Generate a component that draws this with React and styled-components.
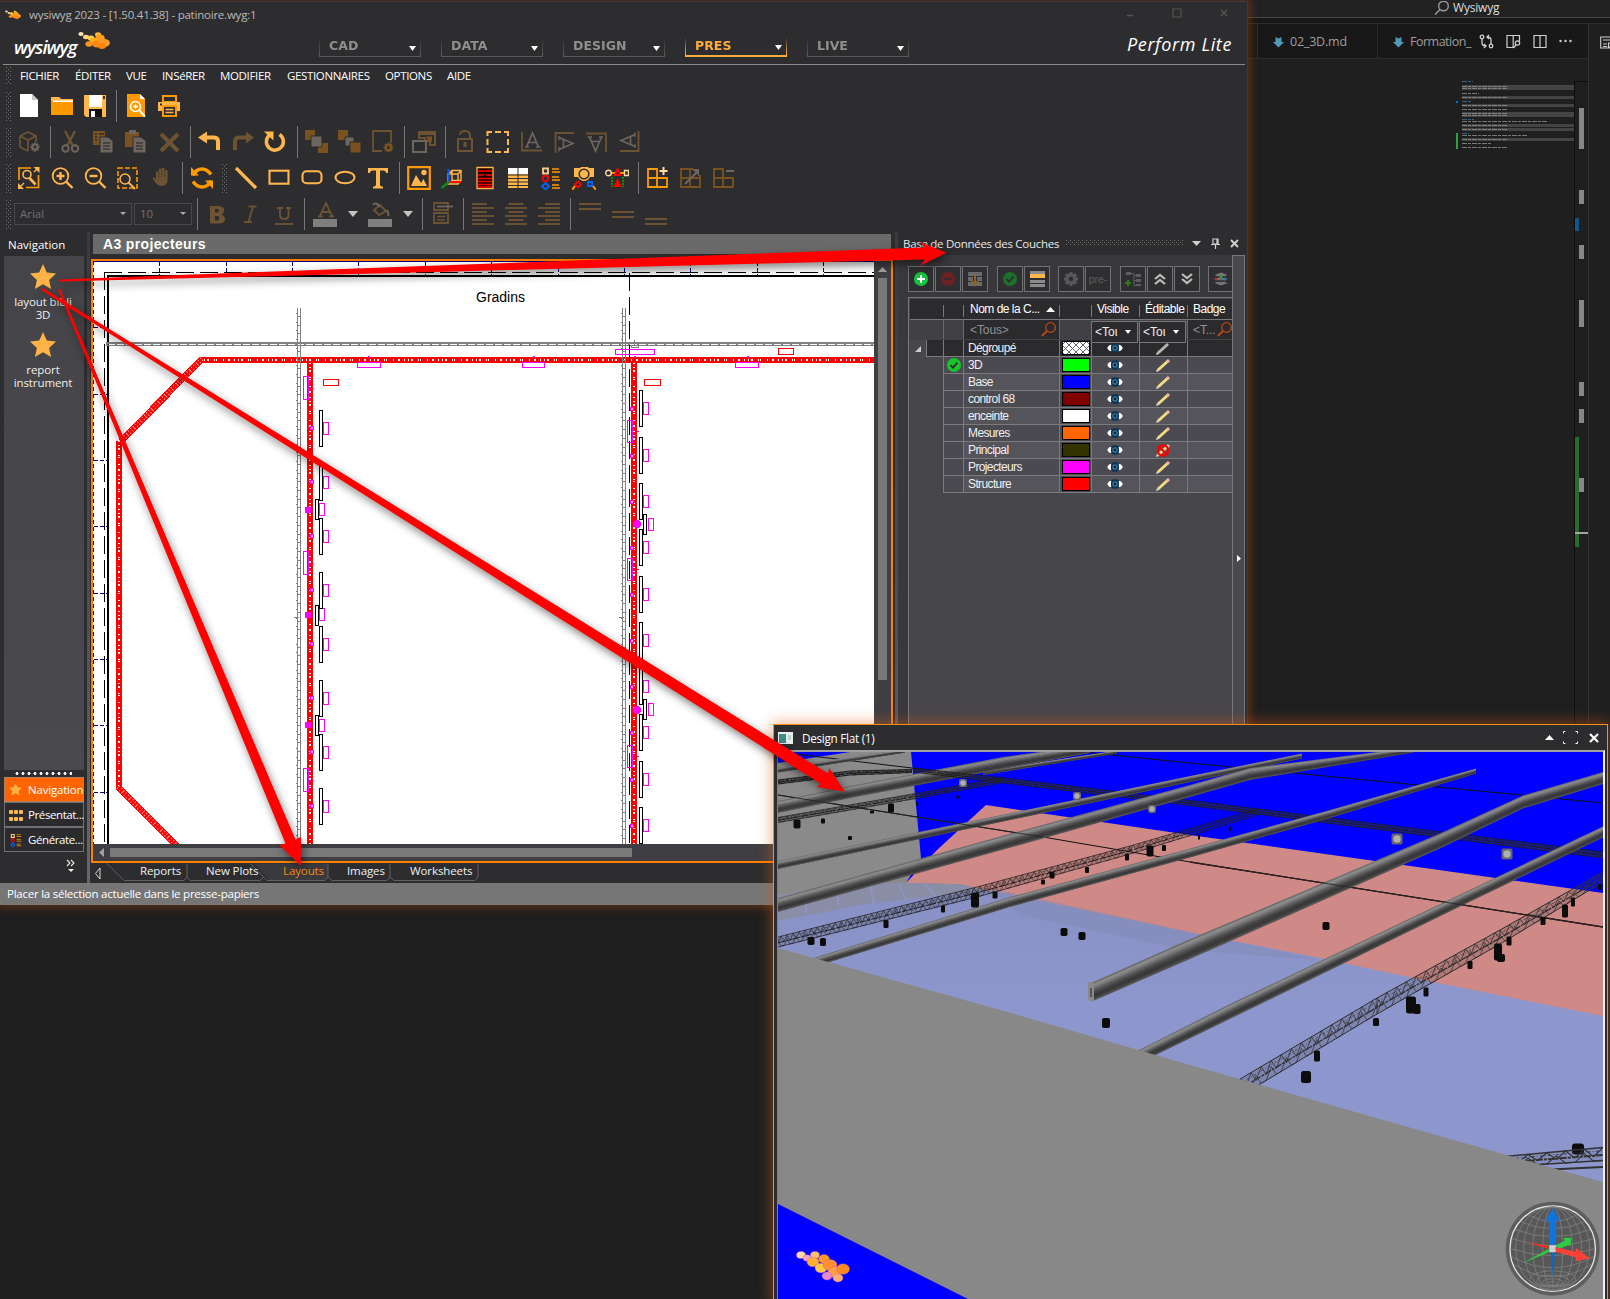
import React from "react";
import styled, { createGlobalStyle, css } from "styled-components";

const GlobalStyle = createGlobalStyle`
  * { box-sizing: border-box; }
  html, body { margin: 0; padding: 0; background: #1f1f1f; overflow: hidden; }
  svg { display: block; flex: none; }
`;

const C = {
  or: "#ff9900",
  li: "#ffb64c",
  dm: "#6b5334",
  db: "#7a5220",
  gr: "#6e665e",
};

const Desktop = styled.div`
  position: relative;
  width: 1610px;
  height: 1299px;
  overflow: hidden;
  background: #1f1f1f;
  color: #fff;
  font-family: "Open Sans", "Noto Sans", sans-serif;
  font-size: 11.5px;
`;

/* ---------- editor window behind ---------- */

const Editor = styled.section`
  position: absolute;
  left: 1164px;
  top: 0;
  width: 446px;
  height: 1299px;
  display: flex;
  flex-direction: column;
`;
const EditorTitle = styled.header`
  height: 18px;
  background: #222223;
  border-bottom: 1px solid #444;
  display: flex;
  align-items: center;
  gap: 3px;
  padding: 0 0 1px 270px;
  font-size: 12px;
  line-height: 16px;
  letter-spacing: -0.2px;
  color: #ddd;
`;
const EditorMain = styled.div`
  flex: 1;
  display: flex;
  border-top: 5px solid #181818;
`;
const EditorLeft = styled.div`
  width: 425px;
  border-right: 1px solid #333;
  border-top: 1px solid #2b2b2b;
  display: flex;
  flex-direction: column;
`;
const EditorTabs = styled.nav`
  height: 35px;
  background: #181818;
  border-bottom: 1px solid #2b2b2b;
  display: flex;
  padding-left: 93px;
`;
const EditorTab = styled.div`
  width: ${(p) => p.$w}px;
  border-left: 1px solid #2b2b2b;
  padding: 1px 0 0 15px;
  display: flex;
  align-items: center;
  gap: 6px;
  color: #9d9d9d;
  font-size: 12.5px;
  letter-spacing: ${(p) => p.$ls || -0.2}px;
`;
const EditorActions = styled.div`
  display: flex;
  align-items: center;
  gap: 12px;
  padding-left: 7px;
`;
const EditorRight = styled.div`
  flex: 1;
  border-top: 1px solid #2b2b2b;
  padding: 12px 0 0 11px;
`;
const MapArea = styled.div`
  flex: 1;
  padding: 22px 0 0 290px;
`;

/* ---------- main window ---------- */

const MainWindow = styled.section`
  position: absolute;
  left: 0;
  top: 1px;
  width: 1248px;
  height: 904px;
  background: #2d2d2f;
  border: 1px solid #3a3a3e;
  border-left-width: 0;
  border-bottom: 0;
  box-shadow: 0 0 9px 2px rgba(180, 70, 14, 0.45);
  display: flex;
  flex-direction: column;
`;
const TitleBar = styled.header`
  height: 26px;
  display: flex;
  align-items: center;
  padding: 0 0 1px 5px;
  gap: 8px;
  color: #b9b9b9;
  letter-spacing: -0.22px;
`;
const TitleText = styled.span`
  flex: 1;
`;
const WinButtons = styled.div`
  display: flex;
  gap: 37px;
  padding: 0 18px 3px 0;
`;
const BrandRow = styled.div`
  height: 37px;
  margin: 0 2px 0 3px;
  border-bottom: 1px solid #8c8c8c;
  display: flex;
`;
const Logo = styled.div`
  width: 316px;
  padding-left: 11px;
  display: flex;
`;
const LogoText = styled.span`
  font: italic 600 18.5px/38px "Open Sans", sans-serif;
  letter-spacing: -0.95px;
  width: 64px;
  white-space: nowrap;
`;
const LogoMark = styled.span`
  padding-top: 4px;
`;
const ModeTabs = styled.nav`
  display: flex;
  gap: 20px;
  padding-top: 8px;
`;
const ModeTab = styled.div`
  width: 102px;
  height: 21px;
  display: flex;
  align-items: center;
  justify-content: space-between;
  padding: 0 4px 1px 9px;
  font: bold 11.5px "DejaVu Sans", sans-serif;
  color: ${(p) => (p.$on ? "#ffab3d" : "#8f8f8f")};
  border: 1px solid;
  border-bottom-width: ${(p) => (p.$on ? 2 : 1)}px;
  border-image: linear-gradient(
      transparent 5%,
      ${(p) => (p.$on ? "#ffab3d" : "#5a5a5a")} 90%
    ) 1;
  svg { margin-top: 4px; }
`;
const ModeLabel = styled.span`
  transform: scaleX(1.09);
  transform-origin: left;
`;
const Edition = styled.div`
  margin-left: auto;
  padding-right: 13px;
  font: italic 18px/33px "Open Sans", sans-serif;
  letter-spacing: 0.62px;
`;
const MenuBar = styled.nav`
  height: 23px;
  display: flex;
  align-items: center;
  padding: 0 0 2px 6px;
`;
const MenuItem = styled.span`
  width: ${(p) => p.$w}px;
  white-space: nowrap;
  font-size: 11.5px;
  letter-spacing: -0.35px;
`;
const dotGrid = css`
  background-image: radial-gradient(circle at 0.5px 0.5px, #747474 0.6px, transparent 0.7px),
    radial-gradient(circle at 0.5px 0.5px, #747474 0.6px, transparent 0.7px);
  background-size: 4px 4px;
  background-position: 0 0, 2px 2px;
`;
const Grip = styled.i`
  width: 6px;
  height: ${(p) => p.$h || 29}px;
  margin-left: ${(p) => p.$ml || 0}px;
  margin-right: ${(p) => p.$mr || 0}px;
  ${dotGrid}
`;
const Toolbar = styled.div`
  height: 36px;
  display: flex;
  align-items: center;
  padding-left: 6px;
`;
const Tool = styled.span`
  width: 33px;
  padding-left: 5px;
`;
const Sep = styled.i`
  width: 1px;
  height: 32px;
  margin: 0 2px 0 5px;
  background: #77777a;
`;
const Combo = styled.div`
  width: ${(p) => p.$w}px;
  height: 22px;
  margin-left: 2px;
  border: 1px solid #49494c;
  display: flex;
  align-items: center;
  justify-content: space-between;
  padding: 0 5px 1px;
  color: #707072;
`;
const ColorTool = styled.div`
  width: 55px;
  display: flex;
  align-items: center;
  gap: 11px;
  padding-left: 6px;
`;

/* ---------- body ---------- */

const Body = styled.div`
  height: 651px;
  display: flex;
`;
const SidePane = styled.aside`
  width: 84px;
  padding-left: 4px;
  display: flex;
  flex-direction: column;
`;
const PaneTitle = styled.div`
  height: 24px;
  line-height: 25px;
  padding-left: 4px;
`;
const NavList = styled.div`
  height: 514px;
  background: linear-gradient(#454449, #4a494e);
  padding-top: 8px;
`;
const NavEntry = styled.div`
  height: 68px;
  display: flex;
  flex-direction: column;
  align-items: center;
  text-align: center;
  line-height: 13px;
  padding: 0 4px 0 2px;
  letter-spacing: -0.1px;
  color: #eee;
  svg { margin-bottom: 5px; }
`;
const Dots = styled.div`
  height: 7px;
  margin: 0 12px 0 10px;
  background: radial-gradient(circle, #eee 1.3px, transparent 1.8px) 0 1px / 6px 5px repeat-x;
`;
const NavButton = styled.div`
  height: 25px;
  border: 1px solid ${(p) => (p.$on ? "#b08060" : "#707073")};
  background: ${(p) => (p.$on ? "#ff6400" : "#2b2b2e")};
  display: flex;
  align-items: center;
  gap: ${(p) => (p.$on ? 6 : 5)}px;
  padding-left: 4px;
  white-space: nowrap;
  letter-spacing: ${(p) => p.$ls || -0.2}px;
`;
const More = styled.div`
  display: flex;
  justify-content: flex-end;
  padding: 7px 8px 0 0;
`;
const Splitter = styled.div`
  width: 3px;
  margin-left: ${(p) => p.$ml}px;
  background: linear-gradient(#3b3b3f, #4c4c50 50%, #68686a);
`;
const Center = styled.div`
  width: 802px;
  margin-left: 1px;
  display: flex;
  flex-direction: column;
`;
const SheetTitle = styled.div`
  height: 20px;
  margin: 2px 2px 5px;
  background: #6a6a6a;
  padding-left: 10px;
  font: bold 14px/20px "Liberation Sans", Arial, sans-serif;
  letter-spacing: 0.35px;
`;
const Sheet = styled.div`
  height: 604px;
  border: 2px solid #ff8000;
  background: #3f3e43;
  display: grid;
  grid-template: 583px 17px / 781px 17px;
`;
const VScroll = styled.div`
  padding: 6px 4px 0;
  display: flex;
  flex-direction: column;
  gap: 6px;
`;
const HScroll = styled.div`
  padding: 4px 0 4px 6px;
  display: flex;
  align-items: center;
  gap: 6px;
`;
const Thumb = styled.i`
  width: ${(p) => p.$w}px;
  height: ${(p) => p.$h}px;
  background: #797979;
`;
const SheetTabs = styled.div`
  height: 20px;
  display: flex;
`;
const TabStrip = styled.div`
  position: relative;
  display: flex;
`;
const TabOutline = styled.svg`
  position: absolute;
  left: 0;
  top: 0;
`;
const SheetTab = styled.span`
  position: relative;
  width: ${(p) => p.$w}px;
  line-height: 16px;
  white-space: nowrap;
  letter-spacing: -0.1px;
  color: ${(p) => (p.$on ? "#f28c0c" : "#f0f0f0")};
`;
const Status = styled.footer`
  height: 22px;
  background: #767676;
  padding-left: 7px;
  line-height: 21px;
  letter-spacing: -0.24px;
`;

/* ---------- layers panel ---------- */

const LayersPane = styled.aside`
  width: 347px;
  display: flex;
  flex-direction: column;
`;
const LayersTitle = styled.div`
  height: 23px;
  display: flex;
  align-items: center;
  padding: 0 5px 1px 5px;
  color: #e8e8e8;
`;
const LayersName = styled.span`
  width: 163px;
  letter-spacing: -0.28px;
  white-space: nowrap;
`;
const TitleDots = styled.i`
  width: 118px;
  height: 6px;
  margin-right: 8px;
  ${dotGrid}
`;
const TitleIcons = styled.div`
  display: flex;
  align-items: center;
  gap: 10px;
`;
const LayersBody = styled.div`
  flex: 1;
  display: flex;
`;
const LayersContent = styled.div`
  width: 334px;
  padding-left: 10px;
  background: #39383c;
  display: flex;
  flex-direction: column;
`;
const Strip = styled.div`
  width: 13px;
  border: 1px solid #78787a;
  border-bottom: 0;
  background: #4a494e;
  padding: 298px 0 0 4px;
`;
const LayerTools = styled.div`
  display: flex;
  padding-top: 11px;
  height: 42px;
  overflow: hidden;
`;
const LayerTool = styled.span`
  flex: none;
  width: 26px;
  height: 26px;
  margin-right: ${(p) => p.$gap || 1}px;
  border: 1px solid #717174;
  background: #2f2f32;
  display: flex;
  align-items: center;
  justify-content: center;
  font: 10.5px "Liberation Sans", sans-serif;
  color: #5c5c5e;
`;
const Table = styled.div`
  flex: 1;
  border: 1px solid #77777a;
  border-width: 1px 0 0 1px;
  background: #47464b;
  padding: 1px 0 0 1px;
  font: 12px "Liberation Sans", Arial, sans-serif;
  letter-spacing: -0.62px;
`;
const rowGrid = css`
  display: grid;
  grid-template-columns: 16px 17px 20px 96px 32px 48px 48px 1fr;
`;
const HeadRow = styled.div`
  ${rowGrid}
  height: 21px;
  background: #2b2b2e;
  border-bottom: 1px solid #77777a;
  line-height: 20px;
  letter-spacing: -0.5px;
`;
const HeadCell = styled.span`
  white-space: nowrap;
  padding: 0 4px 0 ${(p) => p.$pl || 5}px;
  background: ${(p) =>
    p.$bar ? "linear-gradient(#77777a,#77777a) 0 6px / 1px 12px no-repeat" : "none"};
  display: flex;
  align-items: center;
  justify-content: space-between;
`;
const FilterRow = styled.div`
  ${rowGrid}
  grid-template-rows: 19px;
  height: 20px;
  background: #414045;
  color: #8f8f92;
`;
const FilterCell = styled.span`
  background: ${(p) => (p.$dark ? "#2b2b2e" : "none")};
  border-left: ${(p) => (p.$bar ? "1px solid #6a6a6d" : "0")};
  display: flex;
  align-items: center;
  justify-content: space-between;
  padding: 0 ${(p) => (p.$flush ? 0 : 3)}px 0 ${(p) => p.$pl || 5}px;
  white-space: nowrap;
  letter-spacing: -0.1px;
`;
const FilterSelect = styled.span`
  height: 22px;
  position: relative;
  z-index: 1;
  margin: 1px 1px 0 0;
  border: 1px solid #77777a;
  background: #2b2b2e;
  color: #eee;
  display: flex;
  align-items: center;
  justify-content: space-between;
  padding: 0 6px 0 3px;
  letter-spacing: 0;
`;
const Row = styled.div`
  ${rowGrid}
  height: 17px;
  color: #f0f0f0;
`;
const Cell = styled.span`
  background: ${(p) => (p.$blank ? "#47464b" : p.$dark ? "#2b2b2e" : p.$alt ? "#55545a" : "#4b4a50")};
  border-left: ${(p) => (p.$blank ? 0 : 1)}px solid #7b7b7e;
  border-bottom: ${(p) => (p.$blank ? 0 : 1)}px solid #7b7b7e;
  display: flex;
  align-items: center;
  justify-content: ${(p) => (p.$text ? "flex-start" : "center")};
  padding-left: ${(p) => (p.$text ? 4 : 0)}px;
  padding-right: ${(p) => (p.$mark ? 2 : 0)}px;
  overflow: hidden;
`;
const Swatch = styled.i`
  width: 28px;
  height: 14px;
  border: 1px solid #000;
  background: ${(p) =>
    p.$c ||
    "repeating-linear-gradient(45deg,#666 0 1px,transparent 1px 5px),repeating-linear-gradient(-45deg,#666 0 1px,#fff 1px 5px)"};
`;

/* ---------- design window ---------- */

const DesignWindow = styled.section`
  position: absolute;
  left: 773px;
  top: 724px;
  width: 835px;
  height: 580px;
  background: #2d2d30;
  border: 1px solid #ff8c1a;
  box-shadow: 0 0 13px 2px rgba(224, 96, 24, 0.45);
  display: flex;
  flex-direction: column;
`;
const DesignTitle = styled.header`
  height: 25px;
  display: flex;
  align-items: center;
  padding: 0 6px 0 4px;
  gap: 9px;
  font-size: 11.7px;
  letter-spacing: -0.26px;
`;
const DesignButtons = styled.div`
  margin-left: auto;
  display: flex;
  align-items: center;
  gap: 9px;
`;
const DesignView = styled.div`
  flex: 1;
  margin: 0 2px 0 3px;
  border: 1px solid #808080;
  border-top: 2px solid #a0a0a0;
  border-right: 2px solid #f0f0f0;
`;
const Arrows = styled.svg`
  position: absolute;
  left: 0;
  top: 0;
  filter: drop-shadow(2px 4px 4px rgba(0, 0, 0, 0.5));
`;

/* ---------- icons ---------- */

const I = ({ children, w = 24, h = 24, vb }) => (
  <svg width={w} height={h} viewBox={vb || `0 0 ${w} ${h}`} fill="none">
    {children}
  </svg>
);
const Down = ({ c = "#eee", w = 7, h = 4 }) => (
  <I w={w} h={h}><path d={`M0 0H${w}L${w / 2} ${h}Z`} fill={c} /></I>
);

const DocIcon = () => (
  <I><path d="M3 0H15L21 6V23H3Z" fill="#fff" /><path d="M15 0V6H21Z" fill="#c9c9c9" /></I>
);
const FolderIcon = () => (
  <I><path d="M1 3h8l2 2h12v16H1Z" fill={C.or} /><path d="M1 3h8l2 2h12v2H1Z" fill={C.li} /><path d="M3 6.500h20v1.500H3Z" fill="#fff" /></I>
);
const SaveIcon = () => (
  <I><path d="M1 1h22v22H3l-2-2Z" fill={C.li} /><path d="M6 1h13v12H6Z" fill="#fff" /><path d="M6 15h13v8H6Z" fill="#111" /><path d="M8 17h4v6H8Z" fill="#fff" /><path d="M20 2h2v3h-2Z" fill="#4a3210" /></I>
);
const PreviewIcon = () => (
  <I><path d="M3 0h13l5 5v18H3Z" fill={C.or} /><path d="M16 0v5h5Z" fill="#fff" /><circle cx="11.500" cy="12.500" r="5" stroke="#fff" strokeWidth="1.600" /><path d="M11.500 10v5M9 12.500h5" stroke="#fff" strokeWidth="1.300" /><path d="M15 16l6 6.500" stroke="#fff" strokeWidth="2" /></I>
);
const PrintIcon = () => (
  <I><path d="M6 2h13v6H6Z" stroke={C.or} strokeWidth="2" /><path d="M1 8h22v9H1Z" fill={C.li} /><path d="M6 12h13v10H6Z" fill="#2d2d2f" stroke={C.or} strokeWidth="2" /><path d="M8.500 15.500h8M8.500 18.500h8" stroke={C.li} strokeWidth="1.500" /><path d="M3 9.500h2v2H3Z" fill="#2d2d2f" /></I>
);
const GearShape = ({ cx, cy, r, c }) => (
  <g stroke={c} strokeWidth={r * 0.45} transform={`translate(${cx} ${cy})`}>
    {[0, 45, 90, 135].map((a) => <path key={a} d={`M0 ${-r}V${r}`} transform={`rotate(${a})`} />)}
    <circle r={r * 0.55} fill="#2d2d2f" />
  </g>
);
const BoxGear = () => (
  <I><path d="M3 6l8-4 8 4v6M3 6v11l8 4M3 6l8 4 8-4M11 10v11" stroke={C.dm} strokeWidth="1.800" /><GearShape cx={18} cy={17} r={4.6} c={C.gr} /></I>
);
const CutIcon = () => (
  <I><path d="M7 1l8 15M17 1L9 16" stroke={C.dm} strokeWidth="2.400" /><circle cx="7.500" cy="18.500" r="3.200" stroke={C.gr} strokeWidth="2" /><circle cx="17" cy="18.500" r="3.200" stroke={C.gr} strokeWidth="2" /></I>
);
const CopyIcon = () => (
  <I><path d="M2 1h12v14H2Z" fill={C.db} /><path d="M4 4h2m2 0h5M4 7h2m-2 3h2" stroke="#2d2d2f" strokeWidth="1.300" /><path d="M9 7h8l5 4v12H9Z" fill={C.gr} stroke="#2d2d2f" /><path d="M12 13h7M12 16h7M12 19h7" stroke="#3c3835" strokeWidth="1.300" /></I>
);
const PasteIcon = () => (
  <I><path d="M1 2h14v15H1Z" fill={C.db} /><path d="M5 0h7v4H5Z" fill={C.gr} /><path d="M9 7h8l5 4v12H9Z" fill={C.gr} stroke="#2d2d2f" /><path d="M12 13h7M12 16h7M12 19h7" stroke="#3c3835" strokeWidth="1.300" /></I>
);
const XIcon = () => <I><path d="M4 4l17 17M21 4L4 21" stroke={C.dm} strokeWidth="4" /></I>;
const UndoIcon = () => <I><path d="M6 7.500h10q4 0 4 4V20" stroke={C.li} strokeWidth="4" /><path d="M0 7.500L9 1.500v12Z" fill={C.li} /></I>;
const RedoIcon = () => <I><path d="M17 7.500H8q-4 0-4 4V20" stroke={C.dm} strokeWidth="4" /><path d="M23 7.500L15 1.500v12Z" fill={C.dm} /></I>;
const RotateIcon = () => <I><path d="M5 5.500a8.500 8.500 0 1 0 10.500-1" stroke={C.li} strokeWidth="3.500" /><path d="M0 1.500h9.500v9Z" fill={C.li} /></I>;
const StackA = () => <I><path d="M0 0h10v10H0ZM13 13h10v10H13Z" fill={C.db} /><path d="M6 6h11v11H6Z" fill={C.gr} stroke="#2d2d2f" /></I>;
const StackB = () => <I><path d="M0 0h10v10H0Z" fill={C.db} /><path d="M7 7h9v9H7Z" fill={C.gr} stroke="#2d2d2f" /><path d="M12 12h11v11H12Z" fill={C.db} stroke="#2d2d2f" /></I>;
const PageGear = () => <I><path d="M11 21H2V1h18v12" stroke={C.dm} strokeWidth="1.800" /><GearShape cx={17.5} cy={17.500} r={4.800} c={C.db} /></I>;
const WinIcon = () => <I><path d="M7 2h16v13h-5V11h-5V8H7Z" stroke={C.dm} strokeWidth="2" /><path d="M7 1h16v4H7Z" fill={C.dm} /><path d="M14 12l4-4M14.500 7.500H19V12" stroke={C.db} strokeWidth="2" /><path d="M1 11h13v11H1Z" fill="#2d2d2f" stroke={C.gr} strokeWidth="2" /></I>;
const LockIcon = () => <I><path d="M5 9h14v12H5Z" stroke={C.dm} strokeWidth="2" /><path d="M7 5q0-4 5-4t5 5v3" stroke={C.dm} strokeWidth="2" /><path d="M10.500 12h3v5h-3Z" fill={C.dm} /></I>;
const MarqueeIcon = () => <I><path d="M1.500 6V2H6M9 2h6M18 2h4v4M22 9v6M22 18v4h-4M15 22H9M6 22H1.500v-4M1.500 15V9" stroke={C.li} strokeWidth="2" /></I>;
const Axis = ({ r }) => (
  <I>
    <g transform={`rotate(${r} 12 12)`}>
      <path d="M3 2v18.500h20" stroke={C.dm} strokeWidth="1.800" />
      <path d="M7.500 17L13.500 3l6 14M9.500 12.500h8" stroke={C.gr} strokeWidth="1.700" />
      <path d="M6 17h4M17 17h4.500" stroke={C.gr} strokeWidth="1.300" />
    </g>
  </I>
);
const ZoomFit = () => <I><path d="M14 2H2v12M9 21.500h12.500V9" stroke={C.or} strokeWidth="1.700" /><path d="M22.500 7V1h-6ZM1 17v6h6Z" fill={C.li} /><path d="M20 3l-3 3M3 21l4-4" stroke={C.li} strokeWidth="1.400" /><circle cx="10" cy="8.500" r="4" stroke={C.li} strokeWidth="1.600" /><path d="M12.500 12l6 6.500" stroke={C.li} strokeWidth="2.600" /></I>;
const Zoom = ({ plus }) => <I><circle cx="10.500" cy="10" r="7.800" stroke={C.li} strokeWidth="1.800" /><path d={plus ? "M10.500 6v8M6.500 10h8" : "M6.500 10h8"} stroke={C.li} strokeWidth="2.400" /><path d="M16 15.500L22.500 22" stroke={C.li} strokeWidth="2.400" /></I>;
const ZoomWin = () => <I><path d="M2 2h19v20H2Z" stroke={C.or} strokeWidth="1.600" strokeDasharray="5 2" /><circle cx="9" cy="13" r="5" fill="#2d2d2f" stroke={C.li} strokeWidth="1.500" /><path d="M12.500 16.500L19 23" stroke={C.li} strokeWidth="1.800" /></I>;
const HandIcon = () => <I><path d="M7 13V6q1.300-1.500 2.600 0V3.500q1.500-1.800 3 0V2.500q1.500-1.800 3 0v2q1.500-1.300 3 0V15q-1 5-6 5T3.500 12q2-2 3.500 1Z" fill={C.dm} /><path d="M9.800 5v7M12.800 4v7M15.800 4v7" stroke="#2d2d2f" strokeWidth="0.500" /></I>;
const SyncIcon = () => <I><path d="M3 9.500Q6 3 12 3q5 0 9 5.500M21 14.500Q18 21 12 21q-5 0-9-5.500" stroke={C.or} strokeWidth="3.400" /><path d="M1 1v8.500h8ZM23 23v-8.500h-8Z" fill={C.or} /></I>;
const LineIcon = () => <I><path d="M2 2L22 22" stroke={C.li} strokeWidth="3.200" /></I>;
const RectIcon = ({ rx = 0, h = 13 }) => <I><rect x="2.500" y={11.2 - h / 2} width="19" height={h} rx={rx} stroke={C.li} strokeWidth="2.100" /></I>;
const EllipseIcon = () => <I><ellipse cx="12" cy="11.500" rx="9.500" ry="5.700" stroke={C.li} strokeWidth="2" /></I>;
const TextIcon = () => <I><path d="M2 2h20v5h-2q0-2.500-3-2.500h-3v14q0 2 3 2v2H7v-2q3 0 3-2v-14H7Q4 4.500 4 7H2Z" fill={C.li} /></I>;
const ImageIcon = () => <I><path d="M1.200 1.200h21.600v21.600H1.200Z" stroke={C.or} strokeWidth="2.200" /><path d="M4 20L9 9l5 8 2.500-4L20 20Z" fill={C.li} /><circle cx="17" cy="6.500" r="2.700" fill={C.li} /></I>;
const CubeIcon = () => <I><path d="M8 8h10v10H8ZM12 4.500h9v10h-9ZM8 8l4-3.500M18 8l3-3.500M18 18l3-3.500M8 18l4-3.500" stroke={C.li} strokeWidth="1.400" /><path d="M8.500 3v13" stroke="#0a5cff" strokeWidth="2" /><path d="M9 16h12" stroke="#ff1010" strokeWidth="2" /><path d="M9 16l-7.500 6" stroke="#108a10" strokeWidth="2.400" /></I>;
const ReportIcon = () => <I><path d="M4 1.500h16v21H4Z" fill="#200" stroke={C.li} strokeWidth="1.300" /><path d="M5 5h14M5 9h6m2 0h6M5 12.500h14M5 15.500h14M5 18.500h14M5 21h14" stroke="#f00" strokeWidth="1.700" /></I>;
const TableIcon = () => <I><path d="M2 2h20v20H2Z" fill={C.li} /><path d="M2 2h20v6H2Z" fill="#fff" /><path d="M2 9h20M2 12.500h20M2 16h20M2 19.500h20M12 2v20" stroke="#2d2d2f" strokeWidth="1" /></I>;
const LegendIcon = ({ s = 24 }) => <I w={s} h={s} vb="0 0 24 24"><path d="M4 2.500h5v5H4Z" stroke="#ffd08a" strokeWidth="1.800" /><circle cx="6.500" cy="12.500" r="2.800" stroke="#f00" strokeWidth="1.800" /><path d="M6.500 17L10 20.200 6.500 23.400 3 20.200Z" stroke="#06f" strokeWidth="1.800" /><path d="M13 3h7M13 6h8M13 11h7M13 14h8M13 19h7M13 22h8" stroke={C.or} strokeWidth="1.300" /></I>;
const CameraIcon = () => <I><path d="M4 2h4l1-1h7l1 1h5v9h-4q-2 4-6 4t-6-4H2V2Z" fill={C.li} /><circle cx="12" cy="8" r="4.800" fill={C.li} stroke="#2d2d2f" strokeWidth="1.600" /><path d="M6 15.500l3 3-3 3-3-3Z" stroke="#f00" strokeWidth="1.800" /><path d="M16 16h4v4h-4Z" stroke="#06f" strokeWidth="1.800" /><path d="M3 20l-3 4M21 20l3 4" stroke={C.or} strokeWidth="2" /></I>;
const SymbolsIcon = () => <I><path d="M6 7h13" stroke={C.or} strokeWidth="2" /><circle cx="3.500" cy="7" r="2.800" stroke="#ffd8a8" strokeWidth="1.400" /><path d="M19.500 4.500h4v5h-4Z" stroke="#ffd8a8" strokeWidth="1.400" /><path d="M12.500 3l3 6h-6Z" stroke="#f00" strokeWidth="1.800" fill="#2d2d2f" /><path d="M12.500 12l4 9h-8Z" fill="#f00" /><path d="M7 11v10M18 11v10" stroke="#0a0" strokeWidth="1.600" strokeDasharray="2 1" /></I>;
const GridIcon = ({ k }) => {
  const c = k === "add" ? C.or : C.db;
  return (
    <I>
      <path d="M2 3h9v9H2ZM2 12h9v9H2ZM11 12h10v9H11Z" stroke={c} strokeWidth="1.800" />
      {k === "add" && <path d="M17.500 1v8M13.500 5h8" stroke="#ffdca8" strokeWidth="2" />}
      {k === "exp" && <g><path d="M11 3h3M21 9v3" stroke={c} strokeWidth="1.800" /><path d="M6 18L18 6" stroke={C.gr} strokeWidth="2" /><path d="M13 3h7v7Z" fill={C.gr} /></g>}
      {k === "del" && <path d="M14 5h8" stroke={C.gr} strokeWidth="2" />}
    </I>
  );
};
const BoldI = () => <I><path fillRule="evenodd" d="M5 4h9q6 1 5 5 0 2.500-3 3.500 4 1 4 4.500 0 4.500-6 4.500H5ZM10 7v3.500h3q2-2 0-3.500ZM10 14v4.500h3q3-2 0-4.500Z" fill={C.dm} /></I>;
const ItalicI = () => <I><path d="M10.500 4.500h8M6 20h8M15 4.500L10.500 20" stroke={C.dm} strokeWidth="1.800" /></I>;
const UnderI = () => <I><path d="M6 6h6M15 6h5M9 6v7q0 4 4.500 4 4 0 4-4V6" stroke={C.dm} strokeWidth="1.900" /><path d="M4 22h18" stroke={C.dm} strokeWidth="1.900" /></I>;
const FontColor = () => <I w={24} h={25}><path d="M7 14L13 1l6 13M9.500 10h7M5 14.500h5M16 14.500h5" stroke={C.dm} strokeWidth="1.800" /><path d="M0 17h24v8H0Z" fill="#7f7f7f" /></I>;
const FillColor = () => <I w={24} h={25}><path d="M6 8l6-5 6 6-7 4Z" stroke={C.dm} strokeWidth="2" /><path d="M5 3q3-4 7 2M19 8q2 4 1 6" stroke={C.gr} strokeWidth="2" /><path d="M0 17h24v8H0Z" fill="#7f7f7f" /></I>;
const InsertIcon = () => <I><path d="M4 1h14v7H4ZM4 11h14v10H4Z" stroke={C.dm} strokeWidth="1.800" /><path d="M7 14.500h8M7 18h8" stroke={C.dm} strokeWidth="1.400" /><path d="M7 4.500h16" stroke={C.gr} strokeWidth="1.800" /></I>;
const AlignIcon = ({ a }) => (
  <I>
    {[2, 6, 10, 14, 18, 22].map((y, i) => {
      const w = i % 2 ? 22 : 15;
      const x = 1 + (a === "c" ? (22 - w) / 2 : a === "r" ? 22 - w : 0);
      return <path key={y} d={`M${x} ${y}h${w}`} stroke={C.dm} strokeWidth="1.900" />;
    })}
  </I>
);
const VAlign = ({ y }) => <I><path d={`M1 ${y}h22M1 ${y + 5}h22`} stroke={C.dm} strokeWidth="1.900" /></I>;
const Star = ({ s = 26 }) => (
  <I w={s} h={s} vb="0 0 26 26"><path d="M13 0l3.800 8.600 9.200 1-6.900 6.300 2 9.100L13 20.300 4.900 25l2-9.100L0 9.600l9.200-1Z" fill="#ffb347" /></I>
);
const PresIcon = () => (
  <I w={14} h={14}>
    {[4, 11].map((y) => [2, 7, 12].map((x) => <rect key={`${x}${y}`} x={x - 2} y={y - 2} width="4" height="4" rx="1" fill={C.li} />))}
  </I>
);

const Blob = ({ w, h, vb = "0 0 32 18" }) => (
  <I w={w} h={h} vb={vb}>
    {[[3, 2, 2.6, "#ffe2b0"], [8, 5, 3, "#ffcf86"], [13, 6, 3.4, "#ffd24a"], [20, 2.500, 3, "#ffb92e"], [16, 9, 4.4, "#ffac1c"], [22, 6, 4.800, "#ff9d1e"], [11, 12, 3.600, "#ff9420"], [19, 12, 4.600, "#ff8a14"], [26.500, 11, 5.400, "#ff9a2a"], [24, 14, 4, "#f98410"]].map(
      ([x, y, r, c], i) => <ellipse key={i} cx={x} cy={y} rx={r} ry={r * 0.75} fill={c} />
    )}
  </I>
);

/* ---------- plan drawing ---------- */

const RedTruss = ({ d, w = 6, diag }) => (
  <g>
    <path d={d} stroke="#f00" strokeWidth={w} />
    {diag ? (
      <g shapeRendering="auto">
        <path d={d} stroke="#fff" strokeWidth="4.500" strokeDasharray="1 2.200" opacity="0.650" />
        <path d={d} stroke="#f00" strokeWidth="1.600" strokeDasharray="6 3" />
      </g>
    ) : (
      <path d={d} stroke="#fff" strokeWidth="1.600" strokeDasharray="1 3 1 2 2 5 1 1 1 6 1 4 2 4" />
    )}
  </g>
);
const GreyTruss = ({ x }) => (
  <g stroke="#808080" strokeWidth="1">
    <path d={`M${x + 0.5} 308V844M${x + 3.5} 308V844`} />
    <path d={`M${x + 2} 316V844`} strokeWidth="4" strokeDasharray="1 7.700" />
    <path d={`M${x - 0.5} 313V844`} strokeDasharray="1 7.700" />
  </g>
);
const Plan = () => {
  const col1 = [0, 1, 2, 3, 4, 5, 6, 7].map((k) => 410.5 + 54 * k);
  const col2 = [390.5, 437.5, 483.5, 529.5, 576.5, 622.5, 668.5, 714.5, 761.5, 807.5];
  const M = "#f0f";
  return (
    <svg width="781" height="583" viewBox="93 261 781 583" fill="none" shapeRendering="crispEdges">
      <rect x="93" y="261" width="781" height="583" fill="#fff" />
      <path d="M93 261.500H874" stroke="#000080" />
      <path d="M93.500 261V844" stroke="#000080" strokeDasharray="4 3" />
      {[159, 226, 292, 358, 425, 491, 558, 624, 690, 757, 823].map((x) => <path key={x} d={`M${x + 0.5} 262V275`} stroke="#000080" strokeDasharray="4 2" />)}
      {[327, 394, 460, 526, 593, 659, 725, 792].map((y) => <path key={y} d={`M94 ${y + 0.5}H107`} stroke="#000080" strokeDasharray="4 2" />)}
      <path d="M104 272.500H874M104.500 272V844" stroke="#000" strokeDasharray="18 6" />
      <path d="M107 276H874M108 275V844" stroke="#000" strokeWidth="2" />
      <path d="M106 343H874" stroke="#808080" strokeWidth="2" />
      <path d="M106 344.500H874" stroke="#808080" strokeWidth="1" strokeDasharray="2 7" />
      <path d="M106 345.500H874" stroke="#808080" strokeWidth="1" />
      <RedTruss d="M200 360H874" />
      <RedTruss d="M202 359L121 441" w={6.500} diag />
      <RedTruss d="M119 441V789" />
      <RedTruss d="M118 787L178 847" w={6.500} diag />
      <RedTruss d="M310 363V844" />
      <RedTruss d="M634 363V844" />
      <GreyTruss x={297} />
      <GreyTruss x={622} />
      <path d="M629.500 261V844" stroke="#000" strokeDasharray="18 6" strokeDashoffset="12" />
      <g stroke="#f00">
        <rect x="323.500" y="379.500" width="15" height="6" />
        <rect x="644.500" y="379.500" width="16" height="6" />
        <rect x="778.500" y="348.500" width="15" height="6" />
      </g>
      <path d="M631.500 345.500h7v2h-7ZM634.500 340v6M294 617.500h5M619 617.500h5" stroke="#808080" />
      <g stroke={M}>
        <rect x="357.500" y="362.500" width="23" height="5" />
        <rect x="522.500" y="362.500" width="22" height="5" />
        <rect x="735.500" y="362.500" width="23" height="5" />
        <rect x="615.500" y="349.500" width="39" height="5" />
        {[376.5, 551.5, 768.5].map((y) => <path key={y} d={`M303.500 ${y}h5v23h-5ZM312 ${y + 12}h2`} />)}
        {[420.5, 558.5, 745.5].map((y) => <path key={y} d={`M627.500 ${y}h5v22h-5ZM637 ${y + 11}h2`} />)}
        {col1.map((y) => <rect key={y} x="323.500" y={y + 12} width="5" height="12" />)}
        {col2.map((y) => <rect key={y} x="643.500" y={y + 12} width="5" height="12" />)}
        {[503.5, 608.5, 719.5].map((y) => <rect key={y} x="319.500" y={y} width="5" height="12" />)}
        {[518.5, 703.5].map((y) => <rect key={y} x="648.500" y={y} width="5" height="12" />)}
        {col1.map((y) => <rect key={y} x="310.500" y={y + 16} width="3" height="3" fill="#f9c" />)}
        {col2.map((y) => <rect key={y} x="630.500" y={y + 17} width="3" height="3" fill="#f9c" />)}
      </g>
      <g fill={M}>
        {[510, 615, 725].map((y) => <circle key={y} cx="308" cy={y} r="3.500" />)}
        {[524, 710].map((y) => <circle key={y} cx="637" cy={y} r="4" />)}
        {[368, 533, 747, 634].map((x) => <rect key={x} x={x} y="356" width="2" height="2" />)}
      </g>
      <g stroke="#000">
        {col1.map((y) => <rect key={y} x="319.500" y={y} width="3" height="36" />)}
        {col2.map((y) => <rect key={y} x="639.500" y={y} width="3" height="36" />)}
        {[499.5, 605.5, 715.5].map((y) => <rect key={y} x="315.500" y={y} width="3" height="20" />)}
        {[514.5, 699.5].map((y) => <rect key={y} x="643.500" y={y} width="3" height="20" />)}
      </g>
      <text x="476" y="302" fontFamily="Liberation Sans, Arial, sans-serif" fontSize="14" fill="#000">Gradins</text>
    </svg>
  );
};

/* ---------- 3D scene ---------- */

const SHADES = ["#6f6f6f", "#8c8c8c", "#808080", "#6c6c6c", "#595959", "#484848", "#3c3c3c", "#383838", "#3e3e3e", "#545454"];
// Points are [x, centre y, vertical thickness]
const Tube = ({ pts }) => (
  <g>
    {SHADES.map((c, i) => {
      const n = SHADES.length;
      const top = pts.map(([x, y, h]) => `${x} ${y - h / 2 + (h * i) / n}`);
      const bot = pts.map(([x, y, h]) => `${x} ${y - h / 2 + Math.min(h, (h * (i + 1)) / n + 0.6)}`).reverse();
      return <path key={i} d={`M${top.concat(bot).join("L")}Z`} fill={c} />;
    })}
  </g>
);
const Truss = ({ pts, c = "#1a1a1a", step = 6, sw = 0.9, shade = 0.3 }) => {
  const upper = [];
  const lower = [];
  for (let s = 0; s < pts.length - 1; s++) {
    const [x1, y1, h1] = pts[s];
    const [x2, y2, h2] = pts[s + 1];
    const n = Math.max(2, Math.round(Math.abs(x2 - x1) / step));
    for (let k = 0; k <= n; k++) {
      const t = k / n;
      const x = x1 + (x2 - x1) * t;
      const y = y1 + (y2 - y1) * t;
      const h = h1 + (h2 - h1) * t;
      upper.push(`${x.toFixed(1)} ${(y + (k % 2 ? -h / 2 : h * 0.15)).toFixed(1)}`);
      lower.push(`${x.toFixed(1)} ${(y + (k % 3 ? h / 2 : -h * 0.15)).toFixed(1)}`);
    }
  }
  const rail = (f) => pts.map(([x, y, h]) => `${x} ${y + h * f}`);
  return (
    <g stroke={c} strokeWidth={sw}>
      <path d={`M${rail(-0.5).concat(rail(0.5).reverse()).join("L")}Z`} fill="#3a3a3a" fillOpacity={shade} stroke="none" />
      <path d={`M${rail(-0.5).join("L")}`} />
      <path d={`M${rail(0.5).join("L")}`} />
      <path d={`M${rail(-0.25).join("L")}`} strokeWidth={sw * 0.6} strokeDasharray="3 2 1 2" />
      <path d={`M${rail(0.08).join("L")}`} strokeWidth={sw * 1.3} strokeDasharray="7 1 3 1" />
      <path d={`M${upper.join("L")}`} strokeWidth={sw * 0.8} />
      <path d={`M${lower.join("L")}`} strokeWidth={sw * 0.7} />
    </g>
  );
};
const LAMPS = [
  [797, 824, 7, 9], [823, 821, 4, 5], [850, 838, 4, 4], [872, 812, 4, 3], [891, 808, 6, 9], [917, 804, 2, 4], [958, 797, 3, 3],
  [811, 941, 7, 8], [823, 942, 6, 8], [886, 924, 5, 8], [943, 909, 4, 7], [975, 900, 8, 15], [995, 895, 5, 7], [1043, 882, 4, 5],
  [1052, 875, 5, 7], [1087, 870, 4, 6], [1127, 857, 4, 7], [1150, 851, 7, 11], [1164, 848, 4, 6], [1064, 932, 7, 8], [1082, 936, 7, 8],
  [1326, 926, 7, 8], [1565, 911, 6, 13], [1573, 902, 4, 9], [1543, 921, 5, 8], [1509, 941, 5, 9], [1498, 952, 8, 17], [1501, 958, 8, 8], [1470, 965, 5, 8],
  [1426, 992, 5, 9], [1411, 1005, 10, 17], [1417, 1009, 7, 10], [1376, 1022, 6, 8], [1317, 1056, 6, 11], [1306, 1077, 10, 12], [1199, 837, 2, 5], [1230, 829, 2, 5], [1600, 887, 4, 6], [1106, 1023, 8, 10], [1578, 1149, 12, 11],
];
const Gizmo = () => (
  <g transform="translate(1552.700 1248.700)">
    <circle r="47" fill="#5e5e5e" />
    <circle r="42.700" fill="#585858" stroke="#e6e6e6" strokeWidth="1.300" />
    <g stroke="#858585" strokeWidth="0.700">
      {[10, 20, 29, 37].map((r) => <ellipse key={r} rx={r} ry="42" />)}
      <path d="M0-42V42" />
      {[-34, -27, -19, -10, 0].map((y) => {
        const w = Math.sqrt(42 * 42 - y * y);
        return <path key={y} d={`M${-w} ${y}Q0 ${y + 14} ${w} ${y}`} />;
      })}
      {[5, 10, 16, 23].map((r) => <ellipse key={r} cy={36 - r * 0.25} rx={r} ry={r * 0.35} />)}
      <path d="M-38 16Q0 40 38 16M-41 8Q0 30 41 8" />
    </g>
    <path d="M-26-6.500L-5-3v3Z" fill="#ff2a1e" />
    <path d="M-30 14.500L-4 0v3.500Z" fill="#2ecc40" />
    <path d="M-2 4h4L.500 33Z" fill="#0a66c8" />
    <path d="M3-3.500L12-8 11-11l7.500 0L18-3l-2.500-.5L6 0Z" fill="#2ecc40" />
    <path d="M-3.500-3.500h7v7h-7Z" fill="#cfcfcf" />
    <path d="M2.500-1.500L23 3v-4L37 9.500 23 12.500V8.500L3 3Z" fill="#ff4136" />
    <path d="M-3.500-4V-28h-4L0-40.500 7-28H3.500V-4Z" fill="#0f75dc" />
  </g>
);
const Scene = () => (
  <svg width="825" height="549" viewBox="778 752 825 549" fill="none">
    <defs>
      <linearGradient id="floor" x1="0" y1="0" x2="0" y2="1">
        <stop offset="0" stopColor="#8890c4" /><stop offset="0.400" stopColor="#8e97cd" />
      </linearGradient>
    </defs>
    <rect x="778" y="752" width="825" height="549" fill="#0000ff" />
    <path d="M778 920L850 884 910 882 1000 888 1190 920 1603 1005V1190H778Z" fill="url(#floor)" />
    <path d="M906 883L937 850 986 805 1190 835 1603 893V1016L1413 978 1320 958 1187 932 1003 893 940 884Z" fill="#cf8987" />
    <path d="M778 763L850 752H911L921 858 906 883 850 884 778 900Z" fill="#8a8a8a" />
    <path d="M778 895L850 884 906 883 960 884 985 890 860 905 778 921Z" fill="#8a8da6" />
    <path d="M806 895V913M838 889V905M870 884l4 20M898 884l8 16M925 884l10 12" stroke="#8e97c8" strokeWidth="2" opacity="0.700" />
    <path d="M990 888L1190 932 1320 960 1187 950 1020 915Z" fill="#8189b5" opacity="0.500" />
    <path d="M778 752L937 771M778 795L1043 837 1190 862 1603 927M1083 752L1190 763 1603 803" stroke="#111" strokeWidth="1" />
    <path d="M1190 862L1603 927" stroke="#3c2020" strokeWidth="1.400" />
    <Truss pts={[[778, 782, 4], [850, 773, 4], [912, 771, 3]]} step={3} shade={0.4} />
    <Tube pts={[[778, 770, 5], [905, 751, 3]]} />
    <Tube pts={[[983, 773, 4], [1117, 752, 3]]} />
    <Tube pts={[[778, 807, 12], [850, 792, 12], [1003, 763, 12], [1090, 749, 8]]} />
    <Truss pts={[[913, 770, 4], [1000, 780, 5], [1190, 803, 5], [1603, 855, 6]]} step={3} shade={0.5} sw={0.7} />
    <Truss pts={[[778, 820, 5], [910, 797, 5], [1003, 780, 5]]} step={3} shade={0.4} sw={0.7} />
    <Tube pts={[[778, 865, 8], [1190, 779, 6], [1302, 756, 5]]} />
    <Truss pts={[[778, 942, 10], [977, 892, 10], [1130, 850, 8], [1257, 812, 6]]} step={3} shade={0.2} sw={0.7} />
    <Tube pts={[[778, 905, 14], [1020, 838, 14], [1190, 791, 12], [1250, 774, 12], [1413, 750, 5]]} />
    <Tube pts={[[815, 962, 9], [1010, 902, 10], [1190, 853, 9], [1330, 814, 8], [1476, 771, 5]]} />
    <Truss pts={[[1603, 877, 10], [1500, 937, 14], [1377, 1006, 16], [1236, 1090, 17]]} c="#2e2e2e" step={5} sw={1} shade={0.2} />
    <Tube pts={[[1092, 992, 19], [1190, 949, 20], [1440, 841, 15], [1523, 802, 13], [1603, 778, 12]]} />
    <path d="M1088 983q5-3 6 2v16q-3 2-6-2Z" fill="#8a8a8a" />
    <path d="M1091 988v9" stroke="#444" strokeWidth="1.500" />
    <Tube pts={[[1130, 1061, 13], [1233, 1010, 15], [1457, 902, 12], [1603, 832, 11]]} />
    <path d="M1190 862L1603 927M778 795L1043 837" stroke="#222" strokeWidth="0.800" />
    {[[1397, 839, 11], [1507, 854, 11], [963, 783, 8], [1077, 796, 8], [1152, 809, 8]].map(([x, y, r]) => (
      <g key={x}><rect x={x - r / 2} y={y - r / 2} width={r} height={r} rx="2" fill="#666" /><circle cx={x} cy={y} r={r / 3} fill="#b0b0b0" /></g>
    ))}
    {LAMPS.map(([x, y, w, h], i) => <rect key={i} x={x - w / 2} y={y - h / 2} width={w} height={h} rx={w / 4} fill="#0c0c0c" />)}
    <Truss pts={[[1500, 1162, 10], [1603, 1154, 13]]} c="#333" step={9} sw={1.500} shade={0.1} />
    <path d="M1500 1172L1603 1167" stroke="#333" strokeWidth="2" />
    <path d="M778 948L997 1009 1190 1065 1510 1156 1603 1182V1301H972L778 1204Z" fill="#888" />
    <g transform="translate(796 1251)">
      {[[5, 4, 4.500, "#ffd9a0"], [11, 7, 4, "#f6a0c8"], [19, 4, 4.500, "#ffc070"], [17, 11, 6, "#ffb030"], [28, 8, 5.500, "#ff9a28"], [25, 17, 6, "#ffc84a"], [34, 14, 7, "#ff9030"], [39, 21, 7, "#ffa040"], [47, 18, 6.500, "#ff8a20"], [31, 25, 5, "#e88ad0"], [42, 27, 5, "#ffb070"]].map(
        ([x, y, r, c], i) => <ellipse key={i} cx={x} cy={y} rx={r} ry={r * 0.8} fill={c} stroke="#c060c0" strokeWidth="0.400" />
      )}
    </g>
    <Gizmo />
  </svg>
);

/* ---------- data ---------- */

const MENU = [["FICHIER", 55], ["ÉDITER", 51], ["VUE", 36], ["INSéRER", 58], ["MODIFIER", 67], ["GESTIONNAIRES", 98], ["OPTIONS", 62], ["AIDE", 40]];
const MODES = ["CAD", "DATA", "DESIGN", "PRES", "LIVE"];
const LAYERS = [["3D", "#00ff00"], ["Base", "#0000ff"], ["control 68", "#800000"], ["enceinte", "#ffffff"], ["Mesures", "#ff6600"], ["Principal", "#333300"], ["Projecteurs", "#ff00ff"], ["Structure", "#ff0000"]];

const Tools = ({ items }) =>
  items.map((it, i) => (it === "|" ? <Sep key={i} /> : <Tool key={i}>{it}</Tool>));

const Eye = () => (
  <I w={16} h={10}>
    <ellipse cx="8" cy="5" rx="6.500" ry="4.800" fill="#0d3450" />
    <path d="M.300 5q1-3 4-3.200Q3.500 5 4.300 8.200 1.300 8 .300 5ZM15.700 5q-1-3-4-3.200.8 3.200 0 6.400 3-.2 4-3.200Z" fill="#fff" />
    <circle cx="8" cy="5" r="2.700" fill="#3f78a4" />
    <circle cx="8" cy="5" r="1.400" fill="#0b2233" />
  </I>
);
const Pencil = ({ grey, no }) => (
  <I w={16} h={15}>
    <path d="M3 12L13 3" stroke={grey ? "#b5b5b5" : "#f1dc82"} strokeWidth="3" />
    {!grey && <path d="M12 4l2-2" stroke="#f3b0a8" strokeWidth="3" />}
    <path d="M1 14l1-3 2 2Z" fill="#ddd" />
    {no && <g><circle cx="8" cy="7.500" r="5.200" stroke="#f00" strokeWidth="2.200" /><path d="M4.500 4l7 7" stroke="#f00" strokeWidth="2.200" /></g>}
  </I>
);
const Check = ({ s = 14, c = "#17c42a" }) => (
  <I w={s} h={s} vb="0 0 14 14"><circle cx="7" cy="7" r="7" fill={c} /><path d="M3.500 7.200l2.500 2.500 4.500-5" stroke="#2d2d2f" strokeWidth="1.800" /></I>
);
const Loupe = () => (
  <I w={15} h={15}><circle cx="9.500" cy="5.500" r="4.800" stroke="#b8481a" strokeWidth="1.300" /><path d="M6 9L.800 14" stroke="#b8481a" strokeWidth="1.800" /></I>
);
const Chevrons = ({ up }) => (
  <I w={14} h={14}><g transform={up ? "" : "rotate(180 7 7)"} stroke="#bdbdbd" strokeWidth="2.200"><path d="M2 7l5-4 5 4M2 12l5-4 5 4" /></g></I>
);
const MdIcon = () => <I w={11} h={12}><path d="M2.500 1l3 1.500 3-1.500v5H11L5.500 11.500 0 6h2.500Z" fill="#519aba" /></I>;

const MAP_ROWS = [
  [81, 11, 0, "#3f6b93"], [86, 46, 1], [88, 46, 1], [93, 17, 0], [97, 46, 1], [101, 9, 0, "#3f6b93"], [105, 46, 1], [109, 45, 0], [113, 46, 1], [115, 46, 1],
  [119, 12, 0, "#3f6b93"], [121, 85, 0], [125, 46, 1], [129, 46, 1], [133, 7, 0, "#3f6b93"], [135, 66, 0], [139, 46, 1], [143, 30, 0], [147, 46, 0],
];
const Minimap = () => (
  <svg width="134" height="650" viewBox="1454 81 134 650" fill="none" shapeRendering="crispEdges">
    {MAP_ROWS.map(([y, w, hl, c]) => (
      <g key={y}>
        {hl ? <rect x="1462" y={y - 1} width="112" height="3" fill="#444" /> : null}
        <path d={`M1462 ${y + 0.500}h${w}`} stroke={c || "#8a8a8a"} strokeWidth="1.300" strokeDasharray="5 1 3 1" opacity="0.850" />
      </g>
    ))}
    <rect x="1456" y="101" width="2" height="2" fill="#0078d4" />
    <rect x="1456" y="133" width="2" height="16" fill="#2ea043" />
    <path d="M1574.500 731V81.500H1588" stroke="#0c0c0c" />
    <g fill="#878787">
      {[[108, 41], [190, 14], [245, 14], [300, 27], [382, 14], [409, 14], [478, 14]].map(([y, h]) => <rect key={y} x="1579" y={y} width="5" height={h} />)}
    </g>
    <rect x="1575" y="218" width="4" height="13" fill="#0f5791" />
    <rect x="1575" y="437" width="4" height="110" fill="#266b30" />
    <rect x="1575" y="532" width="13" height="2" fill="#a5a5a5" />
  </svg>
);

export default function App() {
  return (
    <Desktop>
      <GlobalStyle />
      <Editor>
        <EditorTitle>
          <I w={16} h={14}><circle cx="9.500" cy="5" r="4.800" stroke="#9a9a9a" strokeWidth="1.400" /><path d="M6 8.500L1 13.500" stroke="#9a9a9a" strokeWidth="1.500" /></I>
          Wysiwyg
        </EditorTitle>
        <EditorMain>
          <EditorLeft>
            <EditorTabs>
              <EditorTab $w={120}><MdIcon />02_3D.md</EditorTab>
              <EditorTab $w={95} $ls={-0.5}><MdIcon />Formation_</EditorTab>
              <EditorActions>
                <I w={15} h={15}><g stroke="#d0d0d0" strokeWidth="1.300"><circle cx="3" cy="3" r="1.800" /><circle cx="12" cy="12" r="1.800" /><path d="M3 5v4q0 3 4 3M5 10l2 2-2 2M12 10V6q0-3-4-3M10 1L8 3l2 2" /></g></I>
                <I w={15} h={15}><g stroke="#d0d0d0" strokeWidth="1.200"><path d="M8 13.500H1V1.500h12.500V7M7.200 1.500v12" /><circle cx="11.500" cy="9" r="2.200" /><path d="M10 11l-2.500 3" /></g></I>
                <I w={14} h={15}><path d="M1 1.500h12v12H1ZM7 1.500v12" stroke="#d0d0d0" strokeWidth="1.200" /></I>
                <I w={14} h={4}><g fill="#d0d0d0"><circle cx="1.500" cy="2" r="1.200" /><circle cx="6.500" cy="2" r="1.200" /><circle cx="11.500" cy="2" r="1.200" /></g></I>
              </EditorActions>
            </EditorTabs>
            <MapArea><Minimap /></MapArea>
          </EditorLeft>
          <EditorRight>
            <I w={16} h={13}><path d="M.700 1h14v11H.700ZM3 4h12M3 8h4M3 10.500h4M8.500 7h5v4h-5Z" stroke="#d0d0d0" strokeWidth="1.100" /></I>
          </EditorRight>
        </EditorMain>
      </Editor>

      <MainWindow>
        <TitleBar>
          <Blob w={16} h={10} />
          <TitleText>wysiwyg 2023 - [1.50.41.38] - patinoire.wyg:1</TitleText>
          <WinButtons>
            <I w={10} h={10}><path d="M2 7.500h6" stroke="#555" strokeWidth="1.500" /></I>
            <I w={10} h={10}><path d="M1 1h8v8H1Z" stroke="#555" strokeWidth="1.200" /></I>
            <I w={10} h={10}><path d="M2 2l6 6M8 2L2 8" stroke="#555" strokeWidth="1.400" /></I>
          </WinButtons>
        </TitleBar>
        <BrandRow>
          <Logo>
            <LogoText>wysiwyg</LogoText>
            <LogoMark><Blob w={32} h={18} /></LogoMark>
          </Logo>
          <ModeTabs>
            {MODES.map((m) => <ModeTab key={m} $on={m === "PRES"}><ModeLabel>{m}</ModeLabel><Down w={7} h={5} c="#fff" /></ModeTab>)}
          </ModeTabs>
          <Edition>Perform Lite</Edition>
        </BrandRow>
        <MenuBar>
          <Grip $h={17} $mr={8} />
          {MENU.map(([t, w]) => <MenuItem key={t} $w={w}>{t}</MenuItem>)}
        </MenuBar>
        <Toolbar>
          <Grip />
          <Tools items={[<DocIcon />, <FolderIcon />, <SaveIcon />, "|", <PreviewIcon />, <PrintIcon />]} />
        </Toolbar>
        <Toolbar>
          <Grip />
          <Tools items={[<BoxGear />, "|", <CutIcon />, <CopyIcon />, <PasteIcon />, <XIcon />, "|", <UndoIcon />, <RedoIcon />, <RotateIcon />, "|", <StackA />, <StackB />, <PageGear />, "|", <WinIcon />, "|", <LockIcon />, <MarqueeIcon />, <Axis r={0} />, <Axis r={90} />, <Axis r={180} />, <Axis r={270} />]} />
        </Toolbar>
        <Toolbar>
          <Grip />
          <Tools items={[<ZoomFit />, <Zoom plus />, <Zoom />, <ZoomWin />, <HandIcon />, "|", <SyncIcon />]} />
          <Grip $ml={4} $mr={1} />
          <Tools items={[<LineIcon />, <RectIcon />, <RectIcon rx={4} h={12} />, <EllipseIcon />, <TextIcon />, "|", <ImageIcon />, <CubeIcon />, <ReportIcon />, <TableIcon />, <LegendIcon />, <CameraIcon />, <SymbolsIcon />, "|", <GridIcon k="add" />, <GridIcon k="exp" />, <GridIcon k="del" />]} />
        </Toolbar>
        <Toolbar>
          <Grip />
          <Combo $w={118}>Arial<Down c="#aaa" w={6} h={3} /></Combo>
          <Combo $w={58}>10<Down c="#aaa" w={6} h={3} /></Combo>
          <Sep />
          <Tools items={[<BoldI />, <ItalicI />, <UnderI />, "|"]} />
          <ColorTool><FontColor /><Down c="#c4c4c4" w={10} h={6} /></ColorTool>
          <ColorTool><FillColor /><Down c="#c4c4c4" w={10} h={6} /></ColorTool>
          <Tools items={["|", <InsertIcon />, "|", <AlignIcon a="l" />, <AlignIcon a="c" />, <AlignIcon a="r" />, "|", <VAlign y={2} />, <VAlign y={10} />, <VAlign y={17} />]} />
        </Toolbar>
        <Body>
          <SidePane>
            <PaneTitle>Navigation</PaneTitle>
            <NavList>
              <NavEntry><Star />layout bibli<br />3D</NavEntry>
              <NavEntry><Star />report<br />instrument</NavEntry>
            </NavList>
            <Dots />
            <NavButton $on><Star s={13} />Navigation</NavButton>
            <NavButton $ls={-0.4}><PresIcon />Présentat...</NavButton>
            <NavButton $ls={-0.4}><LegendIcon s={14} />Générate...</NavButton>
            <More>
              <I w={10} h={16}><path d="M1 1l3 3-3 3M5 1l3 3-3 3" stroke="#eee" strokeWidth="1.100" /><path d="M2 10h6l-3 3Z" fill="#eee" /></I>
            </More>
          </SidePane>
          <Splitter $ml={3} />
          <Center>
            <SheetTitle>A3 projecteurs</SheetTitle>
            <Sheet>
              <Plan />
              <VScroll><I w={9} h={5}><path d="M0 5h9L4.500 0Z" fill="#a0a0a0" /></I><Thumb $w={9} $h={402} /></VScroll>
              <HScroll><I w={5} h={9}><path d="M5 0v9L0 4.500Z" fill="#a0a0a0" /></I><Thumb $w={522} $h={9} /></HScroll>
            </Sheet>
            <SheetTabs>
              <TabStrip>
                <TabOutline width="700" height="20" viewBox="91 863 700 20" fill="none">
                  <path d="M254 863.500L270 880.500H325L328 877V863.500Z" fill="#3a3a3e" />
                  <path d="M107 863.500L124 880.500H184L187 877V864M187 877L190 880.500H260L264 877M251 864L267 880.500H325L328 877V864M328 877L332 880.500H387L390 877V864M390 877L394 880.500H475L478 877V864" stroke="#606063" />
                  <path d="M100 868L95.500 873.500 100 879Z" stroke="#ddd" />
                </TabOutline>
                <SheetTab $w={49} />
                <SheetTab $w={66}>Reports</SheetTab>
                <SheetTab $w={77}>New Plots</SheetTab>
                <SheetTab $w={64} $on>Layouts</SheetTab>
                <SheetTab $w={63}>Images</SheetTab>
                <SheetTab $w={70}>Worksheets</SheetTab>
              </TabStrip>
            </SheetTabs>
          </Center>
          <Splitter $ml={2} />
          <LayersPane>
            <LayersTitle>
              <LayersName>Base de Données des Couches</LayersName>
              <TitleDots />
              <TitleIcons>
                <Down c="#d0d0d0" w={9} h={5} />
                <I w={9} h={11}><path d="M2 1h5v5H2ZM0 6.500h9M4.500 7v4M6 1v5" stroke="#d0d0d0" strokeWidth="1.200" /></I>
                <I w={9} h={9}><path d="M1 1l7 7M8 1L1 8" stroke="#d0d0d0" strokeWidth="1.900" /></I>
              </TitleIcons>
            </LayersTitle>
            <LayersBody>
              <LayersContent>
                <LayerTools>
                  <LayerTool><I w={14} h={14}><circle cx="7" cy="7" r="7" fill="#12c43c" /><path d="M7 3v8M3 7h8" stroke="#fff" strokeWidth="2" /></I></LayerTool>
                  <LayerTool><I w={14} h={14}><circle cx="7" cy="7" r="7" fill="#6e2226" /><path d="M3 7h8" stroke="#3a2a2c" strokeWidth="2" /></I></LayerTool>
                  <LayerTool $gap={9}><I w={16} h={16}><path d="M1 1h14v4H1ZM1 6h5v4H1ZM10 6h5v4h-5ZM1 11h14v4H1Z" fill="#6a6a6c" /><path d="M8 3v9M5 10l3 4 3-4" stroke="#8a6428" strokeWidth="2" /></I></LayerTool>
                  <LayerTool><Check c="#1f6f2c" /></LayerTool>
                  <LayerTool $gap={8}><I w={15} h={16}><path d="M0 0h15v3H0ZM0 9h15v3H0ZM0 13h15v3H0Z" fill="#8b8b8b" /><path d="M0 3h15v4H0Z" fill="#ffb64c" /></I></LayerTool>
                  <LayerTool><I w={16} h={16}><GearShape cx={8} cy={8} r={7} c="#58585a" /></I></LayerTool>
                  <LayerTool $gap={9}>pre-</LayerTool>
                  <LayerTool><I w={16} h={16}><path d="M1 1h5v3H1ZM11 3h5v3h-5ZM11 8h5v3h-5ZM11 13h5v2h-5Z" fill="#5d5d60" /><path d="M6 2.500h3v12h2M9 4.500h2M9 9.500h2" stroke="#5d5d60" /><path d="M3 9v6M0 12h6" stroke="#2f7a1c" strokeWidth="2" /></I></LayerTool>
                  <LayerTool><Chevrons up /></LayerTool>
                  <LayerTool $gap={8}><Chevrons /></LayerTool>
                  <LayerTool><I w={18} h={16}><path d="M1 4l8-3 8 3-8 3ZM1 8l8-3 8 3-8 3ZM1 12l8-3 8 3-8 3Z" fill="#77777a" stroke="#2f2f32" /><circle cx="4" cy="8" r="1.600" fill="#a33" /><circle cx="13" cy="8" r="1.600" fill="#37a" /><circle cx="9" cy="6" r="1.500" fill="#3a3" /></I></LayerTool>
                </LayerTools>
                <Table>
                  <HeadRow>
                    <HeadCell /><HeadCell /><HeadCell $bar />
                    <HeadCell $bar $pl={7}>Nom de la C...<I w={9} h={5}><path d="M0 5h9L4.500 0Z" fill="#fff" /></I></HeadCell>
                    <HeadCell $bar />
                    <HeadCell $bar $pl={6}>Visible</HeadCell>
                    <HeadCell $bar $pl={6}>Éditable</HeadCell>
                    <HeadCell $bar $pl={6}>Badge</HeadCell>
                  </HeadRow>
                  <FilterRow>
                    <FilterCell /><FilterCell /><FilterCell $bar />
                    <FilterCell $dark $bar $pl={6}>&lt;Tous&gt;<Loupe /></FilterCell>
                    <FilterCell $bar />
                    <FilterSelect>&lt;Toι<Down c="#fff" w={6} h={4} /></FilterSelect>
                    <FilterSelect>&lt;Toι<Down c="#fff" w={6} h={4} /></FilterSelect>
                    <FilterCell $dark $bar $flush>&lt;T...<Loupe /></FilterCell>
                  </FilterRow>
                  <Row>
                    <Cell $blank><I w={6} h={6}><path d="M6 0v6H0Z" fill="#ccc" /></I></Cell>
                    <Cell $dark /><Cell $dark />
                    <Cell $dark $text>Dégroupé</Cell>
                    <Cell $dark><Swatch /></Cell>
                    <Cell $dark $mark><Eye /></Cell>
                    <Cell $dark $mark><Pencil grey /></Cell>
                    <Cell $dark />
                  </Row>
                  {LAYERS.map(([name, color], i) => (
                    <Row key={name}>
                      <Cell $blank /><Cell $blank />
                      <Cell>{i === 0 && <Check />}</Cell>
                      <Cell $alt={i % 2 === 1} $text>{name}</Cell>
                      <Cell><Swatch $c={color} /></Cell>
                      <Cell $alt={i % 2 === 1} $mark><Eye /></Cell>
                      <Cell $alt={i % 2 === 1} $mark><Pencil no={name === "Principal"} /></Cell>
                      <Cell $alt={i % 2 === 1} />
                    </Row>
                  ))}
                </Table>
              </LayersContent>
              <Strip><I w={5} h={9}><path d="M0 1v7l4-3.500Z" fill="#fff" /></I></Strip>
            </LayersBody>
          </LayersPane>
        </Body>
        <Status>Placer la sélection actuelle dans le presse-papiers</Status>
      </MainWindow>

      <DesignWindow>
        <DesignTitle>
          <I w={15} h={12}><path d="M0 0h15v12H0Z" fill="#e8eef0" /><path d="M1 2h7v9H1Z" fill="#3c8f86" /><path d="M10 3h3v5h-3Z" fill="#b8d8c0" /></I>
          Design Flat (1)
          <DesignButtons>
            <I w={9} h={5}><path d="M0 5h9L4.500 0Z" fill="#fff" /></I>
            <I w={15} h={13}><path d="M.500 2.500V.5H2.500M12.500 .500h2V2.500M14.500 10.500v2h-2M2.500 12.500h-2v-2" stroke="#fff" strokeWidth="1" /></I>
            <I w={14} h={10}><path d="M3 1l8 8M11 1L3 9" stroke="#fff" strokeWidth="2.200" /></I>
          </DesignButtons>
        </DesignTitle>
        <DesignView><Scene /></DesignView>
      </DesignWindow>

      <Arrows width="1610" height="1299" viewBox="0 0 1610 1299">
        <g fill="#f00">
          <path d="M59 279.500L924 247.500 920 242 946.700 252.700 920 265.700 925 259.500 59 281.500Z" />
          <path d="M43 288L828 773.500 829.300 768 845 791.700 816.700 787 821 784 41 290Z" />
          <path d="M60 288.500L295.500 839.500 301 837 300.700 865.700 279.300 845 285.500 843.500 58 289.500Z" />
        </g>
      </Arrows>
    </Desktop>
  );
}
